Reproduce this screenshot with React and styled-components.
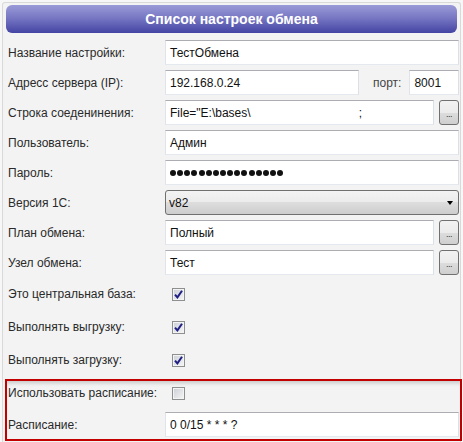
import React from 'react';
import styled, { createGlobalStyle } from 'styled-components';

const Global = createGlobalStyle`
  html, body { margin: 0; padding: 0; background: #f7f7f7; overflow: hidden; }
  body {
    font-family: "Liberation Sans", Arial, sans-serif;
    font-size: 12px;
    color: #222;
  }
`;

const Window = styled.div`
  box-sizing: border-box;
  margin: 2px 2px 0;
  height: calc(100vh - 2px);
  border: 1px solid #d9d9d9;
  border-bottom: none;
  border-radius: 3px 3px 0 0;
  background: #f3f3f3;
`;

const Header = styled.div`
  margin: 2px 3px 0;
  height: 28px;
  border-radius: 6px;
  background: linear-gradient(to bottom, #9a9ad8 0%, #7878c4 45%, #4444a4 100%);
  display: flex;
  align-items: center;
  justify-content: center;
  color: #fff;
  font-weight: bold;
  font-size: 14px;
`;

const Form = styled.div`
  padding: 7px 1px 0 5px;
  display: flex;
  flex-direction: column;
`;

const Row = styled.div`
  display: grid;
  grid-template-columns: 157px 1fr;
  align-items: center;
  height: ${p => p.$h || 25}px;
  margin-top: ${p => p.$mt || 0}px;
`;

const Label = styled.div`
  color: #2a2a2a;
  white-space: nowrap;
`;

const Field = styled.div`
  display: flex;
  align-items: center;
  height: 100%;
  min-width: 0;
`;

const TextBox = styled.div`
  box-sizing: border-box;
  height: 25px;
  flex: ${p => (p.$w ? 'none' : '1')};
  width: ${p => (p.$w ? `${p.$w}px` : 'auto')};
  margin-left: ${p => p.$ml || 0}px;
  background: #fff;
  border: 1px solid;
  border-color: #abadb3 #dbdfe6 #e3e9ef #e2e3ea;
  padding: 0 4px;
  display: flex;
  align-items: center;
  white-space: pre;
  overflow: hidden;
  color: #111;
`;

const Gap = styled.span`
  display: inline-block;
  width: ${p => p.$w}px;
`;

const PortLabel = styled.span`
  margin-left: 14px;
  color: #444;
`;

const DotsWrap = styled.div`
  display: flex;
  gap: 1.15px;
`;

const Dot = styled.span`
  width: 6px;
  height: 6px;
  border-radius: 50%;
  background: #111;
`;

const BrowseButton = styled.div`
  box-sizing: border-box;
  flex: none;
  width: 20px;
  height: 25px;
  margin-left: 5px;
  border: 1px solid #707070;
  border-radius: 3px;
  background: linear-gradient(to bottom, #f2f2f2 0%, #ebebeb 50%, #dddddd 50%, #cfcfcf 100%);
  display: flex;
  align-items: center;
  justify-content: center;
  padding-top: 3px;
  font-size: 9px;
  color: #333;
  letter-spacing: -0.5px;
`;

const Select = styled.div`
  box-sizing: border-box;
  flex: 1;
  height: 25px;
  border: 1px solid #707070;
  border-radius: 3px;
  background: linear-gradient(to bottom, #f3f3f3 0%, #ebebeb 50%, #dddddd 50%, #cdcdcd 100%);
  display: flex;
  align-items: center;
  padding: 0 5px 0 3px;
  color: #111;
`;

const SelectText = styled.span`
  flex: 1;
`;

const Arrow = styled.span`
  width: 0;
  height: 0;
  border-left: 3.5px solid transparent;
  border-right: 3.5px solid transparent;
  border-top: 4px solid #000;
  margin-top: 1px;
`;

const CheckBox = styled.span`
  box-sizing: border-box;
  width: 13px;
  height: 13px;
  margin-left: 7px;
  border: 1px solid #8e8f8f;
  background: linear-gradient(135deg, #cbcfd5 0%, #f6f6f6 100%);
  display: flex;
  align-items: center;
  justify-content: center;
  box-shadow: inset 0 0 0 1px #f4f4f4;
`;

const Highlight = styled.div`
  margin: 5px -3px 0;
  border: 2px solid #c20000;
  padding: 0 1px 2px;
  box-shadow: inset 0 5px 4px -3px rgba(0, 0, 0, 0.18);
  display: flex;
  flex-direction: column;
`;

const Check = ({ checked }) => (
  <CheckBox>
    {checked && (
      <svg width="9" height="9" viewBox="0 0 9 9">
        <path d="M1 4.6 L3.4 7.4 L8 0.8" fill="none" stroke="#1f1f85" strokeWidth="2" />
      </svg>
    )}
  </CheckBox>
);

export default function App() {
  return (
    <>
      <Global />
      <Window>
        <Header>Список настроек обмена</Header>
        <Form>
          <Row>
            <Label>Название настройки:</Label>
            <Field><TextBox>ТестОбмена</TextBox></Field>
          </Row>
          <Row $mt={5}>
            <Label>Адресс сервера (IP):</Label>
            <Field>
              <TextBox $w={194}>192.168.0.24</TextBox>
              <PortLabel>порт:</PortLabel>
              <TextBox $w={50} $ml={8}>8001</TextBox>
            </Field>
          </Row>
          <Row $mt={5}>
            <Label>Строка соеденинения:</Label>
            <Field>
              <TextBox>File="E:\bases\<Gap $w={108} />;</TextBox>
              <BrowseButton>...</BrowseButton>
            </Field>
          </Row>
          <Row $mt={5}>
            <Label>Пользователь:</Label>
            <Field><TextBox>Админ</TextBox></Field>
          </Row>
          <Row $mt={5}>
            <Label>Пароль:</Label>
            <Field>
              <TextBox>
                <DotsWrap>
                  {Array.from({ length: 16 }).map((_, i) => <Dot key={i} />)}
                </DotsWrap>
              </TextBox>
            </Field>
          </Row>
          <Row $mt={5}>
            <Label>Версия 1С:</Label>
            <Field>
              <Select><SelectText>v82</SelectText><Arrow /></Select>
            </Field>
          </Row>
          <Row $mt={5}>
            <Label>План обмена:</Label>
            <Field>
              <TextBox>Полный</TextBox>
              <BrowseButton>...</BrowseButton>
            </Field>
          </Row>
          <Row $mt={5}>
            <Label>Узел обмена:</Label>
            <Field>
              <TextBox>Тест</TextBox>
              <BrowseButton>...</BrowseButton>
            </Field>
          </Row>
          <Row $h={28} $mt={5}>
            <Label>Это центральная база:</Label>
            <Field><Check checked /></Field>
          </Row>
          <Row $h={28} $mt={5}>
            <Label>Выполнять выгрузку:</Label>
            <Field><Check checked /></Field>
          </Row>
          <Row $h={28} $mt={5}>
            <Label>Выполнять загрузку:</Label>
            <Field><Check checked /></Field>
          </Row>
          <Highlight>
            <Row $h={24}>
              <Label>Использовать расписание:</Label>
              <Field><Check /></Field>
            </Row>
            <Row $mt={7}>
              <Label>Расписание:</Label>
              <Field><TextBox>0 0/15 * * * ?</TextBox></Field>
            </Row>
          </Highlight>
        </Form>
      </Window>
    </>
  );
}
